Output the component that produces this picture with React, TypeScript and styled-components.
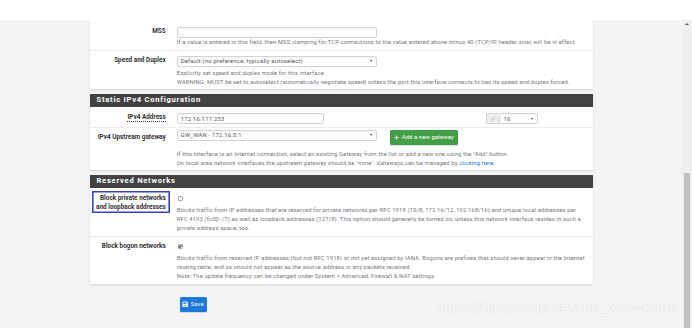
import React from "react";
import styled, { createGlobalStyle, css } from "styled-components";
import { FaPlus, FaSave } from "react-icons/fa";

const GlobalStyle = createGlobalStyle`
  html, body {
    margin: 0;
    padding: 0;
    background: #f4f4f4;
  }
  body {
    font-family: Roboto, "Liberation Sans", Arial, sans-serif;
    color: #333;
    overflow: hidden;
  }
`;

const Page = styled.div`
  height: 328px;
  display: flex;
  flex-direction: column;
  overflow: hidden;
`;

const TopStrip = styled.div`
  height: 20px;
  background: #fff;
  flex: none;
`;

const Main = styled.div`
  flex: 1;
  display: flex;
  min-height: 0;
`;

const Content = styled.div`
  flex: 1;
  position: relative;
  padding-left: 89.5px;
`;

const Container = styled.div`
  width: 503.5px;
`;

const Panel = styled.section`
  background: #fff;
  box-shadow: 0 1px 2px rgba(0, 0, 0, 0.14);
  margin-bottom: 5px;
`;

const PanelHeading = styled.h2`
  margin: 0;
  height: 12.6px;
  background: #424242;
  color: #fff;
  font-size: 7.6px;
  font-weight: 700;
  letter-spacing: 0.75px;
  line-height: 12.6px;
  padding-left: 7px;
`;

const Row = styled.div<{ $last?: boolean }>`
  display: flex;
  border-bottom: ${(p) => (p.$last ? "none" : "1px solid #ececec")};
`;

const LabelCell = styled.div<{ $top?: number; $boxed?: boolean }>`
  width: 80.5px;
  flex: none;
  box-sizing: border-box;
  padding: ${(p) => p.$top ?? 5.5}px 4.3px 0 0;
  text-align: right;
  font-size: 6.4px;
  font-weight: 700;
  line-height: 8.7px;
  color: #333;
  ${(p) =>
    p.$boxed &&
    css`
      margin: 3.2px 0 auto 2.5px;
      width: 78px;
      height: 22.3px;
      padding: 2.9px 4.3px 0 0;
      box-shadow: inset 0 0 0 1.6px #3342c2;
    `}
`;

const Underlined = styled.span`
  border-bottom: 1px dotted #333;
`;

const Field = styled.div<{ $top: number; $bottom: number }>`
  flex: 1;
  padding: ${(p) => p.$top}px 9px ${(p) => p.$bottom}px 6.7px;
  min-width: 0;
`;

const Controls = styled.div`
  display: flex;
  align-items: flex-start;
`;

const inputBox = css`
  box-sizing: border-box;
  height: 10.5px;
  border: 1px solid #d4d4d4;
  border-radius: 2px;
  background: #fff;
  font-size: 5.85px;
  letter-spacing: 0.22px;
  color: #555;
  padding: 0 3px;
  display: flex;
  align-items: center;
  box-shadow: inset 0 1px 1px rgba(0, 0, 0, 0.04);
`;

const TextInput = styled.div<{ $w: number }>`
  ${inputBox};
  width: ${(p) => p.$w}px;
`;

const Select = styled.div<{ $w: number; $h?: number }>`
  ${inputBox};
  width: ${(p) => p.$w}px;
  height: ${(p) => p.$h ?? 11}px;
  justify-content: space-between;
  &::after {
    content: "";
    border-left: 1.5px solid transparent;
    border-right: 1.5px solid transparent;
    border-top: 2px solid #444;
    margin-right: 1px;
  }
`;

const InputGroup = styled.div`
  display: flex;
  margin-left: auto;
  margin-right: 46px;
`;

const Addon = styled.div`
  box-sizing: border-box;
  width: 13.7px;
  height: 10.5px;
  background: #eee;
  border: 1px solid #d4d4d4;
  border-right: none;
  font-size: 5.85px;
  color: #555;
  display: flex;
  align-items: center;
  justify-content: center;
`;

const Button = styled.button<{ $variant: "success" | "primary" }>`
  box-sizing: border-box;
  display: inline-flex;
  align-items: center;
  gap: 3px;
  border: none;
  border-radius: 1.5px;
  color: #fff;
  font-family: inherit;
  font-size: 5.85px;
  letter-spacing: 0.1px;
  padding: 0 3px;
  cursor: pointer;
  white-space: nowrap;
  background: ${(p) => (p.$variant === "success" ? "#43a047" : "#1d78d6")};
  box-shadow: 0 1px 1px rgba(0, 0, 0, 0.15);
`;

const AddButton = styled(Button)`
  width: 68px;
  height: 15.4px;
  margin-left: 13px;
  padding-left: 3.5px;
  svg {
    width: 5px;
    height: 5px;
    flex: none;
  }
`;

const Help = styled.p<{ $gap: number }>`
  margin: ${(p) => p.$gap}px 0 0;
  font-size: 5.85px;
  letter-spacing: 0.13px;
  line-height: 9px;
  color: #787878;
  white-space: nowrap;
  a {
    color: #1e7cd8;
    text-decoration: none;
  }
`;

const CheckLine = styled.div`
  height: 9px;
  display: flex;
  align-items: center;
  padding-left: 1px;
`;

const Check = styled.span<{ $on?: boolean }>`
  box-sizing: border-box;
  width: 5px;
  height: 5px;
  border: 0.8px solid #a8a8a8;
  border-radius: 1px;
  background: ${(p) => (p.$on ? "#e4e4e4" : "#fafafa")};
  display: flex;
  align-items: center;
  justify-content: center;
  &::after {
    content: ${(p) => (p.$on ? '""' : "none")};
    width: 1.2px;
    height: 2.4px;
    border: solid #333;
    border-width: 0 0.9px 0.9px 0;
    transform: translate(0, -0.4px) rotate(45deg);
  }
`;

const SaveBar = styled.div`
  padding: 3.3px 0 0 90.5px;
`;

const SaveButton = styled(Button)`
  width: 26.7px;
  height: 15px;
  padding-left: 1.8px;
  gap: 2.5px;
  svg {
    width: 6.5px;
    height: 6.5px;
    flex: none;
  }
`;

const Watermark = styled.div`
  position: absolute;
  left: 435px;
  top: 279px;
  font-family: "Liberation Sans", Arial, sans-serif;
  font-size: 15.5px;
  color: rgba(255, 255, 255, 0.97);
  text-shadow: 0 0 1px rgba(150, 150, 150, 0.55);
  white-space: nowrap;
  pointer-events: none;
`;

const Scrollbar = styled.div`
  width: 10px;
  flex: none;
  background: #efefef;
  display: flex;
  flex-direction: column;
  align-items: center;
`;

const ScrollArrow = styled.div`
  margin-top: 3px;
  border-left: 2px solid transparent;
  border-right: 2px solid transparent;
  border-bottom: 2.5px solid #555;
`;

const ScrollThumb = styled.div`
  margin-top: 148px;
  width: 6px;
  flex: 1;
  background: #c1c1c1;
`;

export default function App() {
  return (
    <>
      <GlobalStyle />
      <Page>
        <TopStrip />
        <Main>
          <Content>
            <Container>
              <Panel>
                <Row>
                  <LabelCell $top={7.2}>MSS</LabelCell>
                  <Field $top={7} $bottom={3}>
                    <TextInput $w={200.6} />
                    <Help $gap={0.8}>
                      If a value is entered in this field, then MSS clamping for TCP connections to the
                      value entered above minus 40 (TCP/IP header size) will be in effect.
                    </Help>
                  </Field>
                </Row>
                <Row $last>
                  <LabelCell $top={4.6}>Speed and Duplex</LabelCell>
                  <Field $top={4.7} $bottom={2.2}>
                    <Select $w={200.6}>Default (no preference, typically autoselect)</Select>
                    <Help $gap={2.1}>
                      Explicitly set speed and duplex mode for this interface.
                      <br />
                      WARNING: MUST be set to autoselect (automatically negotiate speed) unless the port
                      this interface connects to has its speed and duplex forced.
                    </Help>
                  </Field>
                </Row>
              </Panel>

              <Panel>
                <PanelHeading>Static IPv4 Configuration</PanelHeading>
                <Row>
                  <LabelCell $top={6.3}>
                    <Underlined>IPv4 Address</Underlined>
                  </LabelCell>
                  <Field $top={6.6} $bottom={2.6}>
                    <Controls>
                      <TextInput $w={147.6}>172.16.117.253</TextInput>
                      <InputGroup>
                        <Addon>/</Addon>
                        <Select $w={38.6} $h={10.5}>16</Select>
                      </InputGroup>
                    </Controls>
                  </Field>
                </Row>
                <Row $last>
                  <LabelCell $top={5.6}>IPv4 Upstream gateway</LabelCell>
                  <Field $top={2} $bottom={1.8}>
                    <Controls>
                      <Select $w={200.6} $h={11.4}>GW_WAN - 172.16.0.1</Select>
                      <AddButton $variant="success">
                        <FaPlus />
                        Add a new gateway
                      </AddButton>
                    </Controls>
                    <Help $gap={5.5}>
                      If this interface is an Internet connection, select an existing Gateway from the
                      list or add a new one using the "Add" button.
                      <br />
                      On local area network interfaces the upstream gateway should be "none". Gateways
                      can be managed by <a href="#">clicking here</a>.
                    </Help>
                  </Field>
                </Row>
              </Panel>

              <Panel>
                <PanelHeading>Reserved Networks</PanelHeading>
                <Row>
                  <LabelCell $boxed>
                    Block private networks
                    <br />
                    and loopback addresses
                  </LabelCell>
                  <Field $top={6} $bottom={3.2}>
                    <CheckLine>
                      <Check />
                    </CheckLine>
                    <Help $gap={2.9}>
                      Blocks traffic from IP addresses that are reserved for private networks per RFC
                      1918 (10/8, 172.16/12, 192.168/16) and unique local addresses per
                      <br />
                      RFC 4193 (fc00::/7) as well as loopback addresses (127/8). This option should
                      generally be turned on, unless this network interface resides in such a
                      <br />
                      private address space, too.
                    </Help>
                  </Field>
                </Row>
                <Row $last>
                  <LabelCell $top={5.1}>Block bogon networks</LabelCell>
                  <Field $top={5.3} $bottom={3.2}>
                    <CheckLine>
                      <Check $on />
                    </CheckLine>
                    <Help $gap={2.7}>
                      Blocks traffic from reserved IP addresses (but not RFC 1918) or not yet assigned by
                      IANA. Bogons are prefixes that should never appear in the Internet
                      <br />
                      routing table, and so should not appear as the source address in any packets
                      received.
                      <br />
                      Note: The update frequency can be changed under System &gt; Advanced, Firewall
                      &amp; NAT settings.
                    </Help>
                  </Field>
                </Row>
              </Panel>

              <SaveBar>
                <SaveButton $variant="primary">
                  <FaSave />
                  Save
                </SaveButton>
              </SaveBar>
            </Container>
            <Watermark>https://blog.csdn.net/m0_37549390</Watermark>
          </Content>
          <Scrollbar>
            <ScrollArrow />
            <ScrollThumb />
          </Scrollbar>
        </Main>
      </Page>
    </>
  );
}
